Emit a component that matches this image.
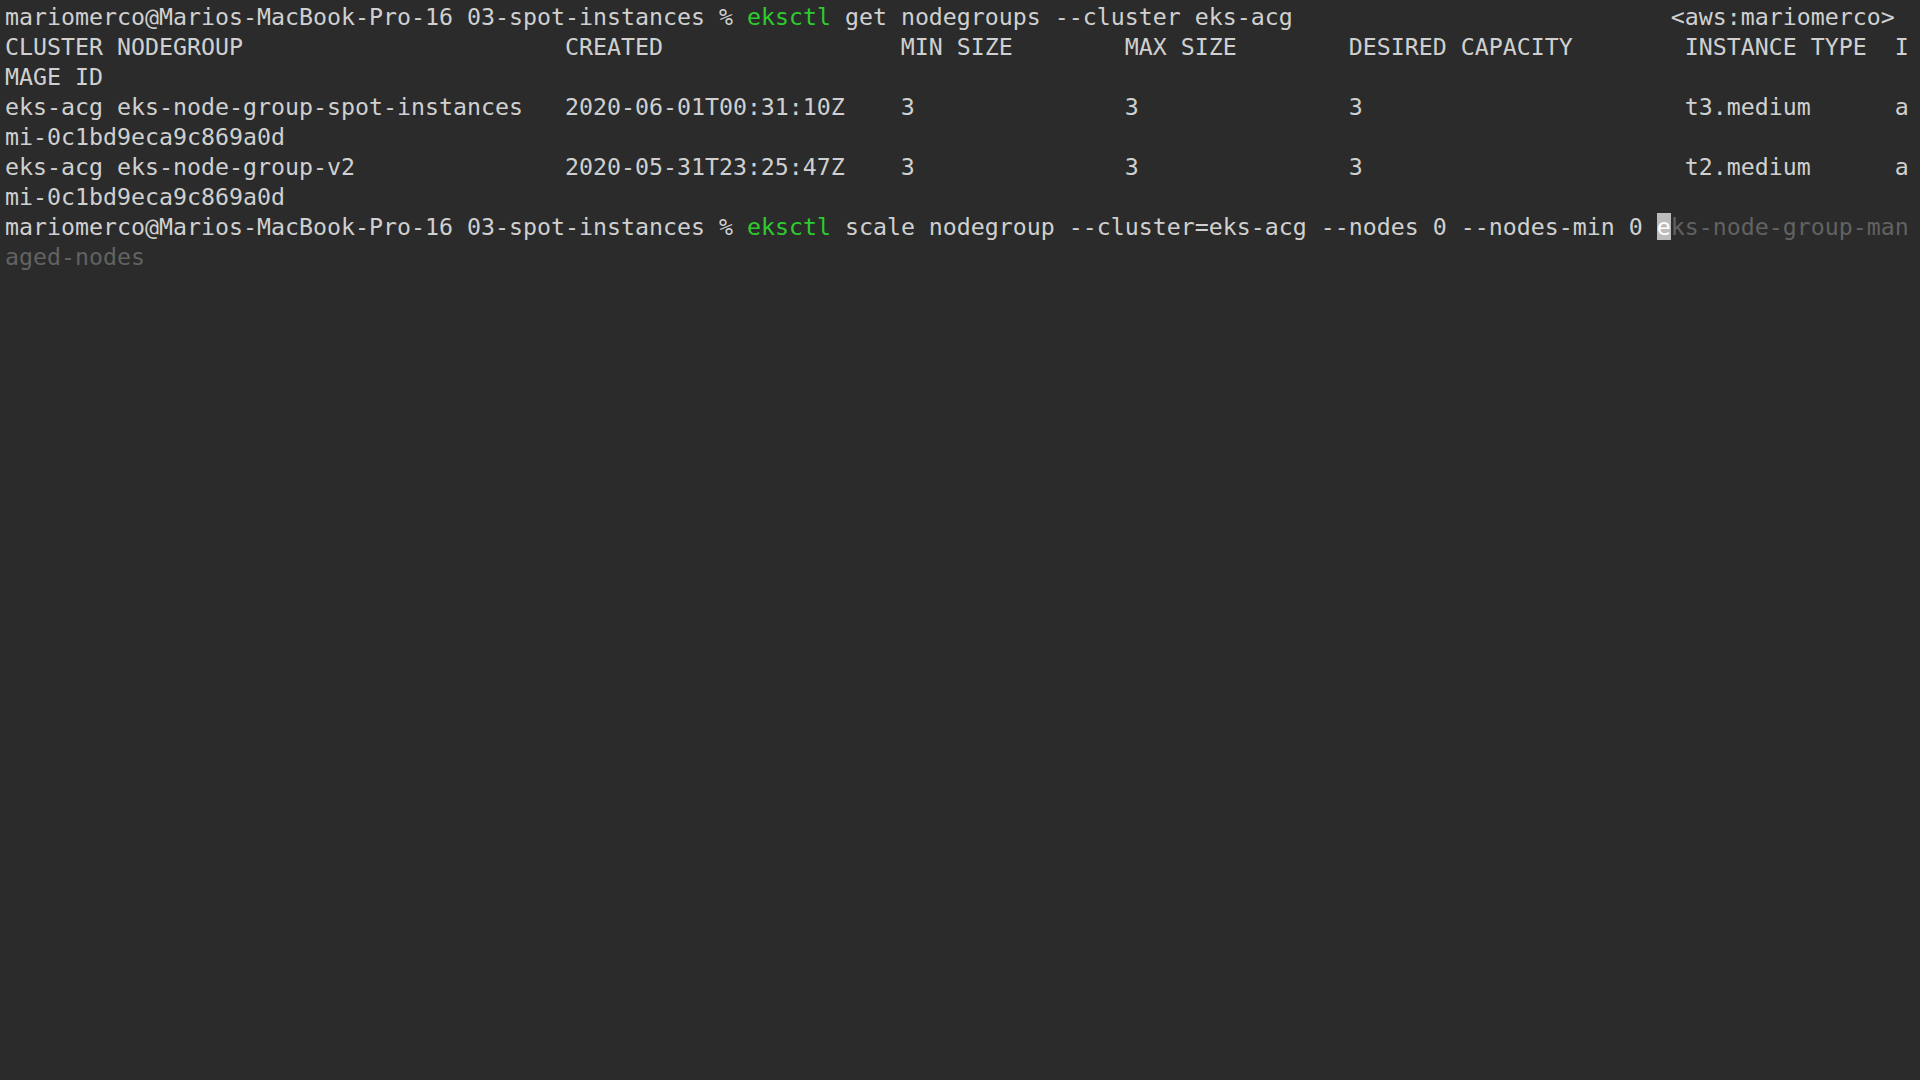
const prompt = "mariomerco@Marios-MacBook-Pro-16 03-spot-instances % ";

// lay out text at fixed terminal columns
function cols(parts: [number, string][]) {
  let s = "";
  for (const [col, text] of parts) s = s.padEnd(col, " ") + text;
  return s;
}

const header = cols([
  [0, "CLUSTER NODEGROUP"],
  [40, "CREATED"],
  [64, "MIN SIZE"],
  [80, "MAX SIZE"],
  [96, "DESIRED CAPACITY"],
  [120, "INSTANCE TYPE"],
  [135, "I"],
]);

const row = (name: string, created: string, type: string) =>
  cols([
    [0, name],
    [40, created],
    [64, "3"],
    [80, "3"],
    [96, "3"],
    [120, type],
    [135, "a"],
  ]);

function Line({ children }: { children?: React.ReactNode }) {
  return <div className="h-[30px] leading-[30px] whitespace-pre">{children}</div>;
}

function App() {
  return (
    <div
      className="min-h-screen w-full bg-[#2b2b2b] text-[#d0d0d0] pl-[5px] pt-[2px] text-[23.25px] overflow-hidden"
      style={{ fontFamily: '"DejaVu Sans Mono", "Liberation Mono", monospace' }}
    >
      <Line>
        {prompt}
        <span className="text-[#2ecb2e]">eksctl</span>
        {" get nodegroups --cluster eks-acg".padEnd(119 - 59, " ")}
        {"<aws:mariomerco>"}
      </Line>
      <Line>{header}</Line>
      <Line>MAGE ID</Line>
      <Line>{row("eks-acg eks-node-group-spot-instances", "2020-06-01T00:31:10Z", "t3.medium")}</Line>
      <Line>mi-0c1bd9eca9c869a0d</Line>
      <Line>{row("eks-acg eks-node-group-v2", "2020-05-31T23:25:47Z", "t2.medium")}</Line>
      <Line>mi-0c1bd9eca9c869a0d</Line>
      <Line>
        {prompt}
        <span className="text-[#2ecb2e]">eksctl</span>
        {" scale nodegroup --cluster=eks-acg --nodes 0 --nodes-min 0 "}
        <span className="bg-[#bcbcbc] text-white">e</span>
        <span className="text-[#626262]">ks-node-group-man</span>
      </Line>
      <Line>
        <span className="text-[#626262]">aged-nodes</span>
      </Line>
    </div>
  );
}

export default App;
